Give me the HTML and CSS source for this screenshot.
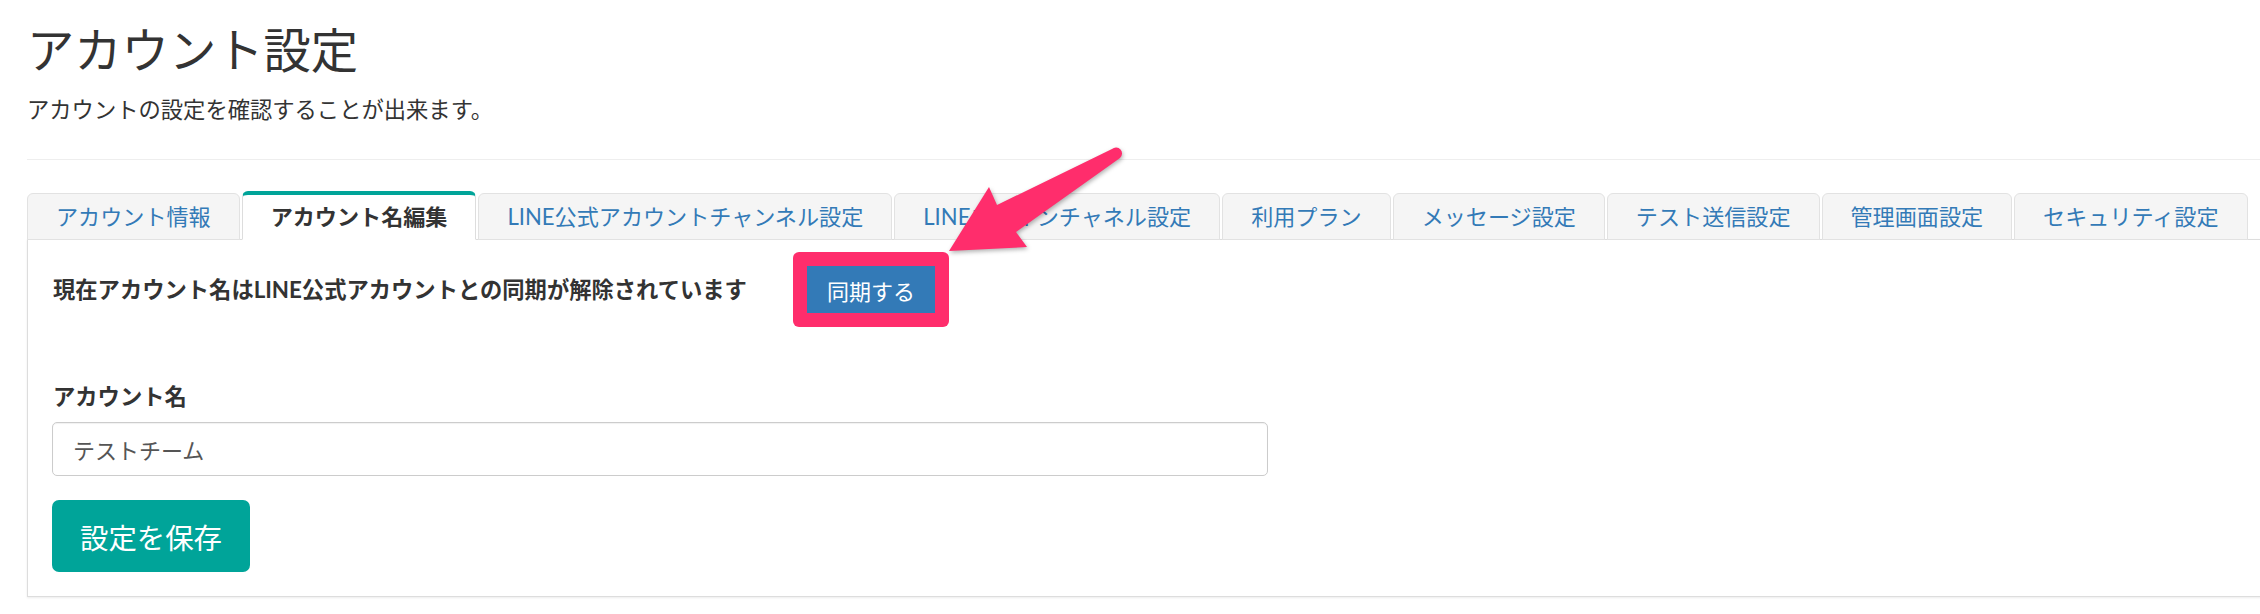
FILE: index.html
```html
<!DOCTYPE html>
<html lang="ja">
<head>
<meta charset="utf-8">
<title>アカウント設定</title>
<link rel="stylesheet" href="styles.css">
</head>
<body>
<div class="page">
  <h1 class="title">アカウント設定</h1>
  <p class="lead">アカウントの設定を確認することが出来ます。</p>
  <hr class="divider">
  <ul class="tabs">
    <li class="tab"><a href="#">アカウント情報</a></li>
    <li class="tab active"><a href="#">アカウント名編集</a></li>
    <li class="tab"><a href="#">LINE公式アカウントチャンネル設定</a></li>
    <li class="tab"><a href="#">LINEログインチャネル設定</a></li>
    <li class="tab"><a href="#">利用プラン</a></li>
    <li class="tab"><a href="#">メッセージ設定</a></li>
    <li class="tab"><a href="#">テスト送信設定</a></li>
    <li class="tab"><a href="#">管理画面設定</a></li>
    <li class="tab"><a href="#">セキュリティ設定</a></li>
  </ul>
  <div class="panel">
    <div class="sync-row">
      <strong class="sync-text">現在アカウント名はLINE公式アカウントとの同期が解除されています</strong>
      <span class="highlight"><button class="btn-sync" type="button">同期する</button></span>
    </div>
    <label class="field-label" for="name">アカウント名</label>
    <input class="field-input" id="name" type="text" value="テストチーム">
    <button class="btn-save" type="button">設定を保存</button>
  </div>
  <svg class="arrow" viewBox="0 0 1200 300" width="1200" height="300" aria-hidden="true">
    <path d="M949 251 L989 187 L997 205 L1112 149 A5.5 5.5 0 0 1 1120 158 L1016 232 L1027 247 Z" fill="#ff2d6c"/>
  </svg>
</div>
</body>
</html>
```

FILE: styles.css
```css
* {
  box-sizing: border-box;
}

html, body {
  margin: 0;
  padding: 0;
  background: #ffffff;
}

body {
  font-family: "Lato", "Noto Sans CJK JP", sans-serif;
  color: #333333;
  font-size: 22.3px;
}

.page {
  position: relative;
  width: 100%;
  min-height: 614px;
  padding: 0 0 0 27px;
  overflow: hidden;
}

.title {
  margin: 22px 0 0;
  font-size: 47.3px;
  line-height: 55px;
  font-weight: 400;
  color: #333333;
}

.lead {
  margin: 16px 0 0;
  font-size: 22.3px;
  line-height: 33px;
  color: #333333;
}

.divider {
  margin: 33px 0 0;
  border: 0;
  border-top: 1px solid #eeeeee;
  height: 0;
}

.tabs {
  list-style: none;
  margin: 31px 0 -1px;
  padding: 0;
  display: flex;
  align-items: flex-end;
  gap: 2px;
  position: relative;
  z-index: 1;
}

.tab {
  height: 47px;
  display: flex;
  align-items: center;
  padding: 0 28px;
  background: #f5f5f5;
  border: 1px solid #e2e2e2;
  border-radius: 6px 6px 0 0;
  white-space: nowrap;
}

.tab a {
  color: #337ab7;
  text-decoration: none;
  font-size: 22.1px;
  line-height: 30px;
}

.tab.active {
  height: 49px;
  background: #ffffff;
  border-color: #dddddd;
  border-top: 4px solid #00a499;
  border-bottom-color: #ffffff;
}

.tab.active a {
  color: #333333;
  font-weight: 700;
}

.panel {
  margin-right: -6px;
  border: 1px solid #dddddd;
  padding: 12px 24px 24px;
  box-shadow: 0 1px 2px rgba(0, 0, 0, 0.08);
}

.sync-row {
  display: flex;
  align-items: center;
}

.sync-text {
  font-weight: 700;
  font-size: 22.3px;
  line-height: 33px;
  padding-left: 1px;
}

.highlight {
  margin-left: 46px;
  padding: 14px;
  background: #ff2d6c;
  border-radius: 6px;
  display: inline-flex;
}

.btn-sync {
  height: 47px;
  padding: 0 20px;
  border: 0;
  background: #337ab7;
  color: #ffffff;
  font-family: inherit;
  font-size: 22px;
}

.field-label {
  display: block;
  margin: 53px 0 9px;
  padding-left: 1px;
  font-size: 22.3px;
  line-height: 33px;
  font-weight: 700;
}

.field-input {
  display: block;
  width: 1216px;
  height: 54px;
  padding: 0 20px;
  border: 1px solid #cccccc;
  border-radius: 5px;
  font-family: inherit;
  font-size: 22px;
  color: #555555;
  box-shadow: inset 0 1px 1px rgba(0, 0, 0, 0.06);
}

.btn-save {
  display: block;
  margin-top: 24px;
  height: 72px;
  padding: 0 28px;
  border: 0;
  border-radius: 7px;
  background: #00a499;
  color: #ffffff;
  font-family: inherit;
  font-size: 28.4px;
}

.arrow {
  position: absolute;
  left: 0;
  top: 0;
  width: 1200px;
  height: 300px;
  pointer-events: none;
  z-index: 5;
  filter: drop-shadow(1px 2px 2px rgba(0, 0, 0, 0.3));
}
```
